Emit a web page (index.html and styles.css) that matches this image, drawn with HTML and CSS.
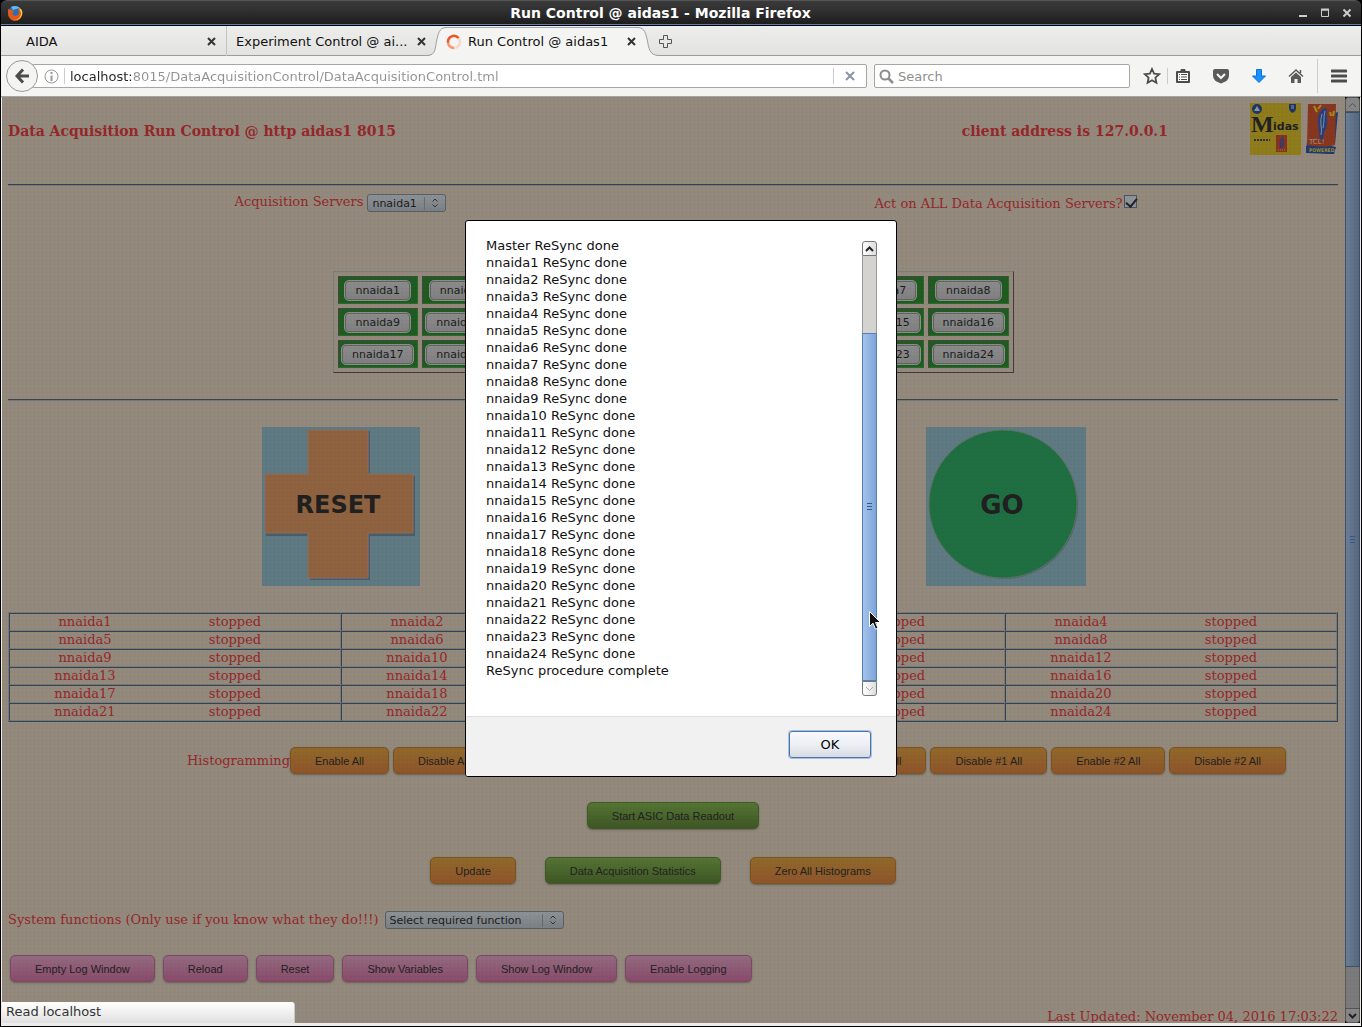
FILE: index.html
```html
<!DOCTYPE html>
<html lang="en">
<head>
    <meta charset="UTF-8">
    <meta name="viewport" content="width=device-width, initial-scale=1.0">
    <title>Run Control @ aidas1</title>
    <link rel="stylesheet" href="styles.css">
</head>
<body>
    <div class="window">
        <header class="titlebar">
            <svg class="fox" width="16" height="16" viewBox="0 0 16 16">
                <circle cx="8" cy="8" r="7" fill="#2a6fb5"/>
                <path d="M4 2c3-2 7-1 9 1l-4 1-3 1z" fill="#63b9e8"/>
                <path d="M1 4c1 0 2 1 3 1 2 0 3 1 3 2-2 0-2 2-1 3 3 2 6 0 6-3 0-2-1-3-1-4 3 1 4 4 4 6 0 4-3 7-7 7S1 12 1 8z" fill="#e2591a"/>
                <path d="M12 3c3 1 4 4 3 7s-4 5-7 5c4-1 6-4 6-7z" fill="#ffcb3a"/>
            </svg>
            <h1>Run Control @ aidas1 - Mozilla Firefox</h1>
            <div class="window-buttons">
                <button aria-label="Minimize"><svg width="10" height="10"><path d="M1 8h8" stroke="#ccc" stroke-width="2"/></svg></button>
                <button aria-label="Maximize"><svg width="10" height="10"><path d="M1.5 2h7v6.500h-7z" fill="none" stroke="#ccc"/><path d="M1 1.500h8" stroke="#ccc" stroke-width="2"/></svg></button>
                <button aria-label="Close"><svg width="10" height="10"><path d="M1.500 1.500l7 7M8.500 1.500l-7 7" stroke="#ccc" stroke-width="2"/></svg></button>
            </div>
        </header>

        <nav class="tabs">
            <div class="tab tab-first">
                <span>AIDA</span>
                <button aria-label="Close tab"><svg width="9" height="9"><path d="M1 1l7 7M8 1l-7 7" stroke="#333" stroke-width="2"/></svg></button>
            </div>
            <div class="tab tab-second">
                <span>Experiment Control @ ai...</span>
                <button aria-label="Close tab"><svg width="9" height="9"><path d="M1 1l7 7M8 1l-7 7" stroke="#333" stroke-width="2"/></svg></button>
            </div>
            <svg class="curve" width="20" height="30" viewBox="0 0 20 30"><path d="M0 30v-.5C9 29.500 8 22 10 13 12 4 14 1.500 20 1.500V30z" fill="#f4f4f2"/><path d="M0 29.500C9 29.500 8 22 10 13 12 4 14 1.500 20 1.500" fill="none" stroke="#9a9ea4"/></svg>
            <div class="tab tab-active">
                <svg width="16" height="16" viewBox="0 0 16 16" fill="none" stroke-width="2.500">
                    <circle cx="7" cy="8" r="6" stroke="#f8d8ca"/>
                    <path d="M7 14a6 6 0 0 1-6-6" stroke="#f29a78"/>
                    <path d="M1 8.500A6 6 0 0 1 11.500 4" stroke="#e8562a"/>
                </svg>
                <span>Run Control @ aidas1</span>
                <button aria-label="Close tab"><svg width="9" height="9"><path d="M1 1l7 7M8 1l-7 7" stroke="#333" stroke-width="2"/></svg></button>
            </div>
            <svg class="curve" width="22" height="30" viewBox="0 0 22 30"><path d="M22 30v-.5C13 29.500 12 22 10 13 8 4 6 1.500 0 1.500V30z" fill="#f4f4f2"/><path d="M22 29.500C12 29.500 12 22 10 13 8 4 6 1.500 0 1.500" fill="none" stroke="#9a9ea4"/></svg>
            <button class="new-tab" aria-label="New tab"><svg width="13" height="13"><path d="M4.500.5h4v4h4v4h-4v4h-4v-4h-4v-4h4z" fill="#e8e8e6" stroke="#555"/></svg></button>
        </nav>

        <div class="toolbar">
            <button class="back" aria-label="Back"><svg width="16" height="16" viewBox="0 0 16 16" fill="none" stroke="#4c4c4c" stroke-width="3"><path d="M9 1.500L3 8l6 6.500M3 8h12"/></svg></button>
            <div class="field url-field">
                <svg width="15" height="15" viewBox="0 0 15 15"><circle cx="7.500" cy="7.500" r="6.500" fill="none" stroke="#999"/><path d="M7.500 3v2M7.500 6.500V12" stroke="#999" stroke-width="2"/></svg>
                <i class="sep"></i>
                <input class="url" type="text" aria-label="Address" value="localhost:8015/DataAcquisitionControl/DataAcquisitionControl.tml">
                <i class="sep"></i>
                <button class="stop" aria-label="Stop"><svg width="10" height="10"><path d="M1 1l8 8M9 1l-8 8" stroke="#8795ab" stroke-width="2"/></svg></button>
            </div>
            <div class="field search-field">
                <svg width="15" height="15" viewBox="0 0 15 15" fill="none" stroke="#8c8c8c"><circle cx="6" cy="6" r="4.500" stroke-width="2"/><path d="M9 9l5 5" stroke-width="2.500"/></svg>
                <input type="text" aria-label="Search" placeholder="Search">
            </div>
            <div class="tools">
                <button aria-label="Bookmark"><svg width="18" height="18" viewBox="0 0 18 18"><path d="M9 2l2.100 4.700 5 .5-3.700 3.500 1 5L9 13.200l-4.400 2.500 1-5L1.900 7.200l5-.5z" fill="none" stroke="#4c4c4c" stroke-width="1.800"/></svg></button>
                <i class="sep sep-short"></i>
                <button aria-label="Bookmarks list"><svg width="16" height="16" viewBox="0 0 16 16"><path d="M2 4h12v10H2z" fill="#fff" stroke="#4c4c4c" stroke-width="2" stroke-linejoin="round"/><path d="M5 3.500L6 1h4l1 2.500z" fill="#4c4c4c"/><path d="M4 6.500h1M6 6.500h6M4 9h1M6 9h6M4 11.500h1M6 11.500h6" stroke="#4c4c4c"/></svg></button>
                <button aria-label="Pocket"><svg width="18" height="16" viewBox="0 0 18 16"><path d="M1 3q0-2 2-2h12q2 0 2 2v4q0 4-3.500 6.500L9 15.500l-4.500-2Q1 11 1 7z" fill="#5a5a5a"/><path d="M5 6l4 4 4-4" fill="none" stroke="#f4f4f2" stroke-width="2.200"/></svg></button>
                <button aria-label="Downloads"><svg width="16" height="16" viewBox="0 0 16 16"><path d="M5.500 1.500h5V8h4L8 14.500 1.500 8h4z" fill="#1a90ff" stroke="#0a72d8"/></svg></button>
                <button aria-label="Home"><svg width="16" height="16" viewBox="0 0 16 16"><path d="M8 4.500l5 4.500v6H9.500v-4h-3v4H3V9z" fill="#5a5a5a"/><path d="M1 8.500l7-6.500 7 6.500M12.500 2v3" fill="none" stroke="#5a5a5a" stroke-width="1.500"/></svg></button>
                <i class="sep sep-tall"></i>
                <button aria-label="Menu"><svg width="16" height="14"><path d="M1 2h14M1 7h14M1 12h14" stroke="#4c4c4c" stroke-width="3" stroke-linecap="round"/></svg></button>
            </div>
        </div>

        <div class="viewport">
            <main class="page">
                <div class="heading">
                    <h2>Data Acquisition Run Control @ http aidas1 8015</h2>
                    <h2 class="client">client address is 127.0.0.1</h2>
                    <div class="logos">
                        <svg width="51" height="52" viewBox="0 0 51 52">
                            <path fill="#8f7d1c" d="M0 0h51v52H0z"/>
                            <circle cx="7" cy="6" r="5" fill="#1f3564"/><path d="M4 8l3-5 3 5z" fill="#8b94a0"/>
                            <path d="M39 1h7v5q0 2-3.500 4Q39 8 39 6z" fill="#1f3564"/><path d="M41 3h3M41 5h3" stroke="#8b94a0"/>
                            <text x="1" y="29" font-family="Liberation Serif" font-weight="bold" font-size="24" fill="#222">M</text>
                            <text x="23" y="27" font-family="DejaVu Sans" font-weight="bold" font-size="11" fill="#222">idas</text>
                            <path d="M4 37h16" stroke="#333" stroke-width="2" stroke-dasharray="2 1"/>
                            <path d="M26 32h11v17H26z" fill="#87331f"/>
                            <path d="M33 34q-4 4-2 11M33 36q1 5-1 8" stroke="#2a3d78" stroke-width="1.500" fill="none"/>
                            <path d="M28 47h8" stroke="#a8824c" stroke-dasharray="1 1"/>
                        </svg>
                        <svg width="32" height="52" viewBox="0 0 32 52">
                            <path d="M29 10l3-1-3 32zM1 38l29 6-2 7-28-1z" fill="#1f3a74"/>
                            <path d="M2 1h28l-1 41-13 3L1 42z" fill="#87371f"/>
                            <path d="M0 43l28 1v7L0 49z" fill="#1f3a74"/>
                            <path d="M20 5c-5 0-8 6-8 13 0 6 1 7 1 12 0 4 1 7 3 7 2-1 1-4 2-7 3-6 4-11 3-16-1-3 1-6-1-9z" fill="#26407e"/>
                            <path d="M16 11q-2 6-1 11t0 10M19 8q-1 4-1 8t-1 9" stroke="#838b98" fill="none"/>
                            <path d="M8 3l3 6M15 2l-3 4M24 9l1 4M28 8l-1 5" stroke="#a38d1d" stroke-width="2"/>
                            <text x="3" y="41" font-family="DejaVu Sans" font-size="7" fill="#a39b91">TCL!</text>
                            <text x="3" y="49" font-family="DejaVu Sans Condensed" font-weight="bold" font-size="5" fill="#9a8f2c">POWERED</text>
                        </svg>
                    </div>
                </div>
                <hr>
                <div class="halves servers">
                    <div>
                        <label for="server">Acquisition Servers</label>
                        <span class="drop">
                            <select id="server"><option>nnaida1</option></select>
                            <svg width="8" height="10"><path d="M1.500 3.500L4 1l2.500 2.500M1.500 6.500L4 9l2.500-2.500" fill="none" stroke="#333"/></svg>
                        </span>
                    </div>
                    <div class="act">
                        <label for="act-all">Act on ALL Data Acquisition Servers?</label>
                        <input type="checkbox" id="act-all" checked>
                    </div>
                </div>

                <table class="node-table" id="node-table"></table>
                <hr>

                <div class="halves actions">
                    <svg width="158" height="159" viewBox="0 0 158 159">
                        <path fill="#5f7a83" d="M0 0h158v159H0z"/>
                        <path d="M48 4h60v45h45v60h-45v44H48v-44H4V49h44z" fill="#4c5c68"/>
                        <path d="M46 3h60v44h45v59h-45v45H46v-45H3V47h43z" fill="#8f6340" stroke="#8c6e63"/>
                        <text class="reset" x="76" y="86" text-anchor="middle">RESET</text>
                    </svg>
                    <svg width="160" height="159" viewBox="0 0 160 159">
                        <path fill="#5f7a83" d="M0 0h160v159H0z"/>
                        <circle cx="78" cy="78" r="74" fill="#52646c"/>
                        <circle cx="77" cy="77" r="74" fill="#206f43" stroke="#5c7461"/>
                        <text x="76" y="87" text-anchor="middle">GO</text>
                    </svg>
                </div>

                <table class="status-table" id="status-table"></table>

                <div class="row histogramming">
                    <div class="row">
                        <span>Histogramming</span>
                        <button class="btn orange">Enable All</button>
                        <button class="btn orange">Disable All</button>
                    </div>
                    <div class="row">
                        <button class="btn orange">Enable #1 All</button>
                        <button class="btn orange">Disable #1 All</button>
                        <button class="btn orange">Enable #2 All</button>
                        <button class="btn orange">Disable #2 All</button>
                    </div>
                </div>

                <div class="row centered">
                    <button class="btn green">Start ASIC Data Readout</button>
                </div>

                <div class="row centered updates">
                    <button class="btn orange">Update</button>
                    <button class="btn green">Data Acquisition Statistics</button>
                    <button class="btn orange">Zero All Histograms</button>
                </div>

                <div class="row functions">
                    <label for="function">System functions (Only use if you know what they do!!!)</label>
                    <span class="drop drop-wide">
                        <select id="function"><option>Select required function</option></select>
                        <svg width="8" height="10"><path d="M1.500 3.500L4 1l2.500 2.500M1.500 6.500L4 9l2.500-2.500" fill="none" stroke="#333"/></svg>
                    </span>
                </div>

                <div class="row log-buttons">
                    <button class="btn pink">Empty Log Window</button>
                    <button class="btn pink">Reload</button>
                    <button class="btn pink">Reset</button>
                    <button class="btn pink">Show Variables</button>
                    <button class="btn pink">Show Log Window</button>
                    <button class="btn pink">Enable Logging</button>
                </div>

                <p class="updated">Last Updated: November 04, 2016 17:03:22</p>
            </main>

            <div class="scrollbar page-scroll">
                <div class="arrow arrow-top"><svg width="9" height="6"><path d="M1 5l3.500-3.500L8 5" fill="none" stroke="#555"/></svg></div>
                <div class="thumb"><i></i></div>
                <div class="trough"></div>
                <div class="arrow arrow-bottom"><svg width="9" height="6"><path d="M1 1l3.500 3.500L8 1" fill="none" stroke="#222" stroke-width="2"/></svg></div>
            </div>

            <div class="overlay"></div>

            <div class="dialog" role="dialog" aria-label="ReSync">
                <div class="dialog-body">
                    <div class="log" id="log"></div>
                    <div class="scrollbar dialog-scroll">
                        <div class="arrow arrow-top"><svg width="9" height="6"><path d="M1 5l3.500-3.500L8 5" fill="none" stroke="#222" stroke-width="2"/></svg></div>
                        <div class="trough"></div>
                        <div class="thumb"><i></i></div>
                        <div class="arrow arrow-bottom"><svg width="9" height="6"><path d="M1 1l3.500 3.500L8 1" fill="none" stroke="#aaa"/></svg></div>
                    </div>
                </div>
                <div class="dialog-footer">
                    <button class="ok">OK</button>
                </div>
                <svg class="pointer" width="12" height="19" viewBox="0 0 12 19"><path d="M.5.5v15l3.500-3.300 2.500 6 2.500-1-2.500-5.700h5z" fill="#111" stroke="#fff"/></svg>
            </div>

            <div class="load-status">Read localhost</div>
        </div>
    </div>

    <script>
        const nodes = Array.from({ length: 24 }, (_, i) => `nnaida${i + 1}`);

        function tableRows(perRow, cell) {
            let html = '';
            for (let i = 0; i < nodes.length; i += perRow) {
                html += `<tr>${nodes.slice(i, i + perRow).map(cell).join('')}</tr>`;
            }
            return html;
        }

        document.getElementById('node-table').innerHTML =
            tableRows(8, n => `<td><button class="node">${n}</button></td>`);

        document.getElementById('status-table').innerHTML =
            tableRows(4, n => `<td><span>${n}</span><span>stopped</span></td>`);

        const lines = ['Master ReSync done', ...nodes.map(n => `${n} ReSync done`), 'ReSync procedure complete'];
        document.getElementById('log').innerHTML = lines.map(l => `<p>${l}</p>`).join('');
    </script>
</body>
</html>
```
FILE: styles.css
```css
:root {
    --page-bg: #938a7d;
    --red: #96272a;
    --line-dark: #3b434a;
    --line-light: #727b82;
    --chrome: #f4f4f2;
}

* {
    margin: 0;
    padding: 0;
    box-sizing: border-box;
}

body {
    font-family: "DejaVu Sans", sans-serif;
    font-size: 13px;
    color: #111;
    background: #000;
}

button {
    font: inherit;
    border: none;
    background: none;
}

svg {
    display: block;
    flex: none;
}

.window {
    display: flex;
    flex-direction: column;
    height: 100vh;
    border: 1px solid #000;
    border-top: none;
    overflow: hidden;
}

/* Title bar */
.titlebar {
    display: flex;
    align-items: center;
    height: 26px;
    flex: none;
    padding: 0 9px 0 6px;
    background: linear-gradient(#3a3a3a, #303030 40%, #1c1c1c);
    border-top: 1px solid #555;
    border-bottom: 1px solid #000;
    box-shadow: inset 0 -1px #5a7fb0;
    border-radius: 6px 6px 0 0;
}

.titlebar h1 {
    flex: 1;
    text-align: center;
    color: #fff;
    font-size: 14px;
}

.window-buttons {
    display: flex;
    gap: 12px;
}

/* Tabs */
.tabs {
    display: flex;
    height: 30px;
    flex: none;
    padding-left: 1px;
    background: linear-gradient(#ededec, #e2e2e0);
    box-shadow: inset 0 -1px #9c9c9c;
}

.tab {
    display: flex;
    align-items: center;
    justify-content: space-between;
    white-space: nowrap;
}

.tab-first {
    width: 224px;
    padding: 0 10px 0 24px;
}

.tab-second {
    width: 201px;
    padding: 0 1px 0 9px;
    border-left: 1px solid #c4c4c4;
}

.tab-active {
    width: 190px;
    padding: 0 1px 1px 0;
    margin-top: 1px;
    border-top: 1px solid #a6a9ad;
    background: var(--chrome);
    gap: 5px;
}

.tab-active svg {
    overflow: visible;
}

.tab-active span {
    flex: 1;
}

.new-tab {
    display: flex;
    align-items: center;
}

/* Toolbar */
.toolbar {
    display: flex;
    align-items: center;
    height: 41px;
    flex: none;
    padding: 0 14px 0 5px;
    background: var(--chrome);
    border-bottom: 1px solid #a5a5a5;
}

.back {
    display: flex;
    align-items: center;
    justify-content: center;
    width: 32px;
    height: 32px;
    flex: none;
    border: 1px solid #999;
    border-radius: 50%;
    background: #f4f4f2;
    z-index: 1;
}

.field {
    display: flex;
    align-items: center;
    height: 24px;
    background: #fff;
    border: 1px solid #a8a6a2;
    border-radius: 2px;
}

.field input {
    flex: 1;
    min-width: 0;
    border: none;
    outline: none;
    font: inherit;
    background: none;
}

.url-field {
    flex: 1;
    margin-left: -6px;
    padding: 0 11px;
    gap: 5px;
}

.field .url {
    color: transparent;
    background: linear-gradient(90deg, #222 62px, #929292 62px);
    background-clip: text;
    -webkit-background-clip: text;
}

.stop {
    margin-left: 6px;
}

.search-field {
    width: 256px;
    margin-left: 7px;
    padding: 0 4px;
    gap: 4px;
}

.search-field input::placeholder {
    color: #8e8e8e;
}

.sep {
    width: 1px;
    height: 16px;
    background: #ccc;
}

.tools {
    display: flex;
    align-items: center;
    gap: 21px;
    margin-left: 13px;
}

.sep-short {
    margin: 0 -14px 0 -15px;
}

.sep-tall {
    height: 34px;
    margin: 0 -8px;
}

/* Page */
.viewport {
    position: relative;
    display: flex;
    flex: 1;
    min-height: 0;
    border: solid #eeebe8;
    border-width: 0 1px 3px;
}

.page {
    flex: 1;
    padding: 0 7px 0 6px;
    background: var(--page-bg);
    color: var(--red);
    font-family: "DejaVu Serif", serif;
    font-size: 13px;
    overflow: hidden;
}

hr {
    height: 2px;
    border: none;
    border-top: 1px solid var(--line-dark);
    border-bottom: 1px solid var(--line-light);
}

.heading {
    display: flex;
    height: 87px;
    padding-top: 6px;
}

.heading h2 {
    font-size: 14px;
    line-height: 56px;
}

.client {
    margin-left: auto;
}

.logos {
    display: flex;
    gap: 5px;
    margin-left: 82px;
}

.halves {
    display: grid;
    grid-template-columns: 1fr 1fr;
    justify-items: center;
}

.servers {
    height: 85px;
    padding-top: 6px;
}

.servers > div {
    display: flex;
    gap: 4px;
    line-height: 20px;
}

.servers .act {
    gap: 1px;
}

.act label {
    padding-top: 2px;
}

.drop {
    display: flex;
    align-items: center;
    width: 79px;
    height: 18px;
    margin-top: 2px;
    padding-right: 6px;
    border: 1px solid #566068;
    border-radius: 3px;
    background: linear-gradient(#8d9296, #7b8084);
}

.drop select {
    appearance: none;
    flex: 1;
    padding-left: 4px;
    margin-right: 6px;
    border: none;
    border-right: 1px solid #666c70;
    outline: none;
    background: none;
    color: #1c1c1c;
    font-family: "DejaVu Sans", sans-serif;
    font-size: 11px;
}

.drop-wide {
    width: 179px;
}

input[type="checkbox"] {
    appearance: none;
    width: 13px;
    height: 13px;
    margin-top: 3px;
    border: 1px solid #4b5560;
    background: #8d9399;
}

input[type="checkbox"]::before {
    content: "";
    display: block;
    width: 5px;
    height: 9px;
    margin-left: 3px;
    border: solid #222;
    border-width: 0 2px 2px 0;
    transform: rotate(40deg);
}

/* Node buttons */
.node-table {
    width: 681px;
    margin: 0 auto 26px;
    table-layout: fixed;
    border: 1px solid;
    border-color: #7c7c78 #3c3c3c #3c3c3c #7c7c78;
    border-spacing: 4px;
}

.node-table td {
    height: 28px;
    border: 1px solid;
    border-color: #464646 #2c6a2c #2c6a2c #464646;
    background: #1f5c1f;
    text-align: center;
    vertical-align: middle;
}

.node {
    display: block;
    height: 21px;
    margin: 0 auto;
    padding: 0 10px;
    border: 1px solid #8e8e8e;
    border-radius: 5px;
    background: linear-gradient(#8c8c8c, #808080);
    box-shadow: inset 0 0 0 1px #626262;
    color: #1c1c1c;
    font-family: "DejaVu Sans", sans-serif;
    font-size: 11px;
}

.actions {
    padding: 26px 0;
}

.actions text {
    font: bold 26px "DejaVu Sans", sans-serif;
    fill: #202020;
}

.actions .reset {
    font-size: 24px;
}

/* Run state */
.status-table {
    width: 100%;
    table-layout: fixed;
    border: 1px solid;
    border-color: var(--line-light) var(--line-dark) var(--line-dark) var(--line-light);
    border-spacing: 0;
}

.status-table td {
    height: 18px;
    border: 1px solid;
    border-color: var(--line-dark) var(--line-light) var(--line-light) var(--line-dark);
    line-height: 16px;
    white-space: nowrap;
}

.status-table span {
    display: inline-block;
    width: 150px;
    text-align: center;
}

/* Buttons */
.row {
    display: flex;
    align-items: center;
    gap: 4px;
}

.centered {
    justify-content: center;
    margin-top: 28px;
}

.btn {
    height: 27px;
    padding: 0 24px;
    border: 1px solid;
    border-radius: 5px;
    box-shadow: 0 1px 2px rgba(0, 0, 0, 0.3);
    color: #222;
    font-family: "Liberation Sans", sans-serif;
    font-size: 11px;
    white-space: nowrap;
}

.orange {
    border-color: #7f5320;
    background: linear-gradient(#91692a, #8f552c);
}

.green {
    border-color: #3f5a24;
    background: linear-gradient(#557534, #3f5625);
}

.pink {
    border-color: #7f4866;
    background: linear-gradient(#936b80, #8a4b6b);
}

.histogramming {
    justify-content: space-between;
    margin: 25px 52px 0 179px;
}

.histogramming span {
    margin-right: -4px;
}

.updates {
    gap: 29px;
    padding-right: 20px;
}

.functions {
    gap: 6px;
    margin-top: 25px;
}

.log-buttons {
    gap: 8px;
    margin: 26px 0 0 2px;
}

.updated {
    margin-top: 27px;
    text-align: right;
}

/* Scrollbars */
.scrollbar {
    display: flex;
    flex-direction: column;
    width: 15px;
    flex: none;
}

.arrow {
    display: flex;
    align-items: center;
    justify-content: center;
    height: 15px;
    border: 1px solid #777;
    background: linear-gradient(90deg, #fff, #ddd);
}

.arrow-top {
    border-radius: 3px 3px 0 0;
}

.arrow-bottom {
    border-radius: 0 0 3px 3px;
}

.trough {
    flex: 1;
    background: #d4d3d0;
    border: solid #9a9a98;
    border-width: 0 1px;
}

.thumb {
    display: flex;
    align-items: center;
    justify-content: center;
    border: 1px solid #5580b5;
    background: linear-gradient(90deg, #a3c3ec, #7ea5d8);
}

.thumb i {
    width: 5px;
    height: 7px;
    background: repeating-linear-gradient(#36588a 0 1px, transparent 1px 3px);
}

.page-scroll .arrow {
    background: #868686;
    border-color: #555;
}

.page-scroll .thumb {
    flex: 21;
    border-color: #3a516d;
    background: linear-gradient(90deg, #6c7f96, #56677e);
}

.page-scroll .trough {
    background: #7b7b7b;
    border-color: #5a5a5a;
}

/* Dotted shade over the page while the dialog is open */
.overlay {
    position: absolute;
    inset: 0;
    background-image: linear-gradient(45deg, rgba(0, 0, 0, 0.04) 25%, transparent 25%, transparent 75%, rgba(0, 0, 0, 0.04) 75%);
    background-size: 4px 4px;
}

/* Alert dialog */
.dialog {
    position: absolute;
    top: 123px;
    left: 0;
    right: 0;
    width: 432px;
    margin: 0 auto;
    border: 1px solid #000;
    border-radius: 3px;
    background: #fff;
    overflow: hidden;
}

.dialog-body {
    display: flex;
    height: 495px;
    padding: 20px 19px 20px 20px;
}

.log {
    display: flex;
    flex: 1;
    flex-direction: column;
    justify-content: flex-end;
    padding-bottom: 17px;
    overflow: hidden;
    line-height: 17px;
}

.dialog-scroll .thumb {
    flex: 9;
}

.dialog-scroll .trough {
    flex: 2;
}

.dialog-footer {
    display: flex;
    justify-content: flex-end;
    padding: 14px 25px 18px;
    border-top: 1px solid #ddd;
    background: #f1f1f1;
}

.ok {
    width: 82px;
    height: 27px;
    border: 1px solid #4b76ad;
    border-radius: 3px;
    background: linear-gradient(#f6f8fc, #eceff4 50%, #d8dce2);
    box-shadow: 0 0 0 1px #a9c0de;
}

.pointer {
    position: absolute;
    top: 390px;
    left: 403px;
}

.load-status {
    position: absolute;
    left: 0;
    bottom: 0;
    width: 293px;
    height: 21px;
    padding-left: 4px;
    border: solid #c8c8c8;
    border-width: 0 1px 0 0;
    border-radius: 0 3px 0 0;
    background: linear-gradient(#fff, #e0e0e0);
    color: #333;
    line-height: 20px;
}
```
